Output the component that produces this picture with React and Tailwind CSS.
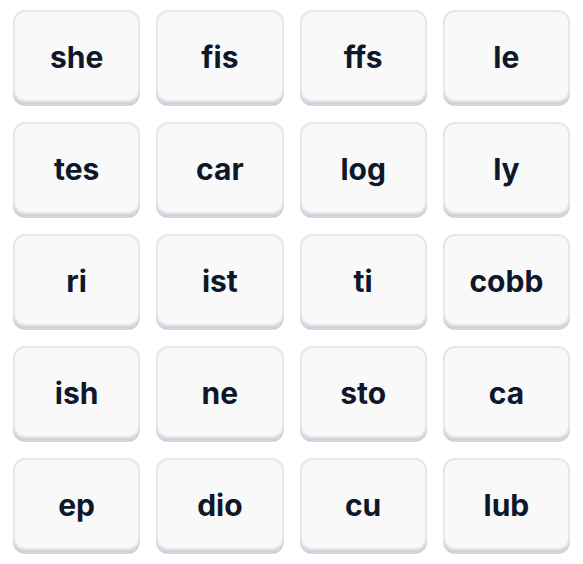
const words = [
  'she', 'fis', 'ffs', 'le',
  'tes', 'car', 'log', 'ly',
  'ri', 'ist', 'ti', 'cobb',
  'ish', 'ne', 'sto', 'ca',
  'ep', 'dio', 'cu', 'lub',
];

export default function App() {
  return (
    <div className="min-h-screen bg-white px-[13px] py-[10px]" style={{ fontFamily: 'Inter, "Noto Sans", sans-serif' }}>
      <div className="grid grid-cols-4 gap-x-4 gap-y-5">
        {words.map((w, i) => (
          <button
            key={i}
            className="h-[92px] pt-[3px] rounded-xl border-2 border-[#e5e7eb] bg-[#f9f9fa] shadow-[0_4px_0_#d1d5db] flex items-center justify-center text-[30px] font-bold text-[#0f172a]"
          >
            {w}
          </button>
        ))}
      </div>
    </div>
  );
}
